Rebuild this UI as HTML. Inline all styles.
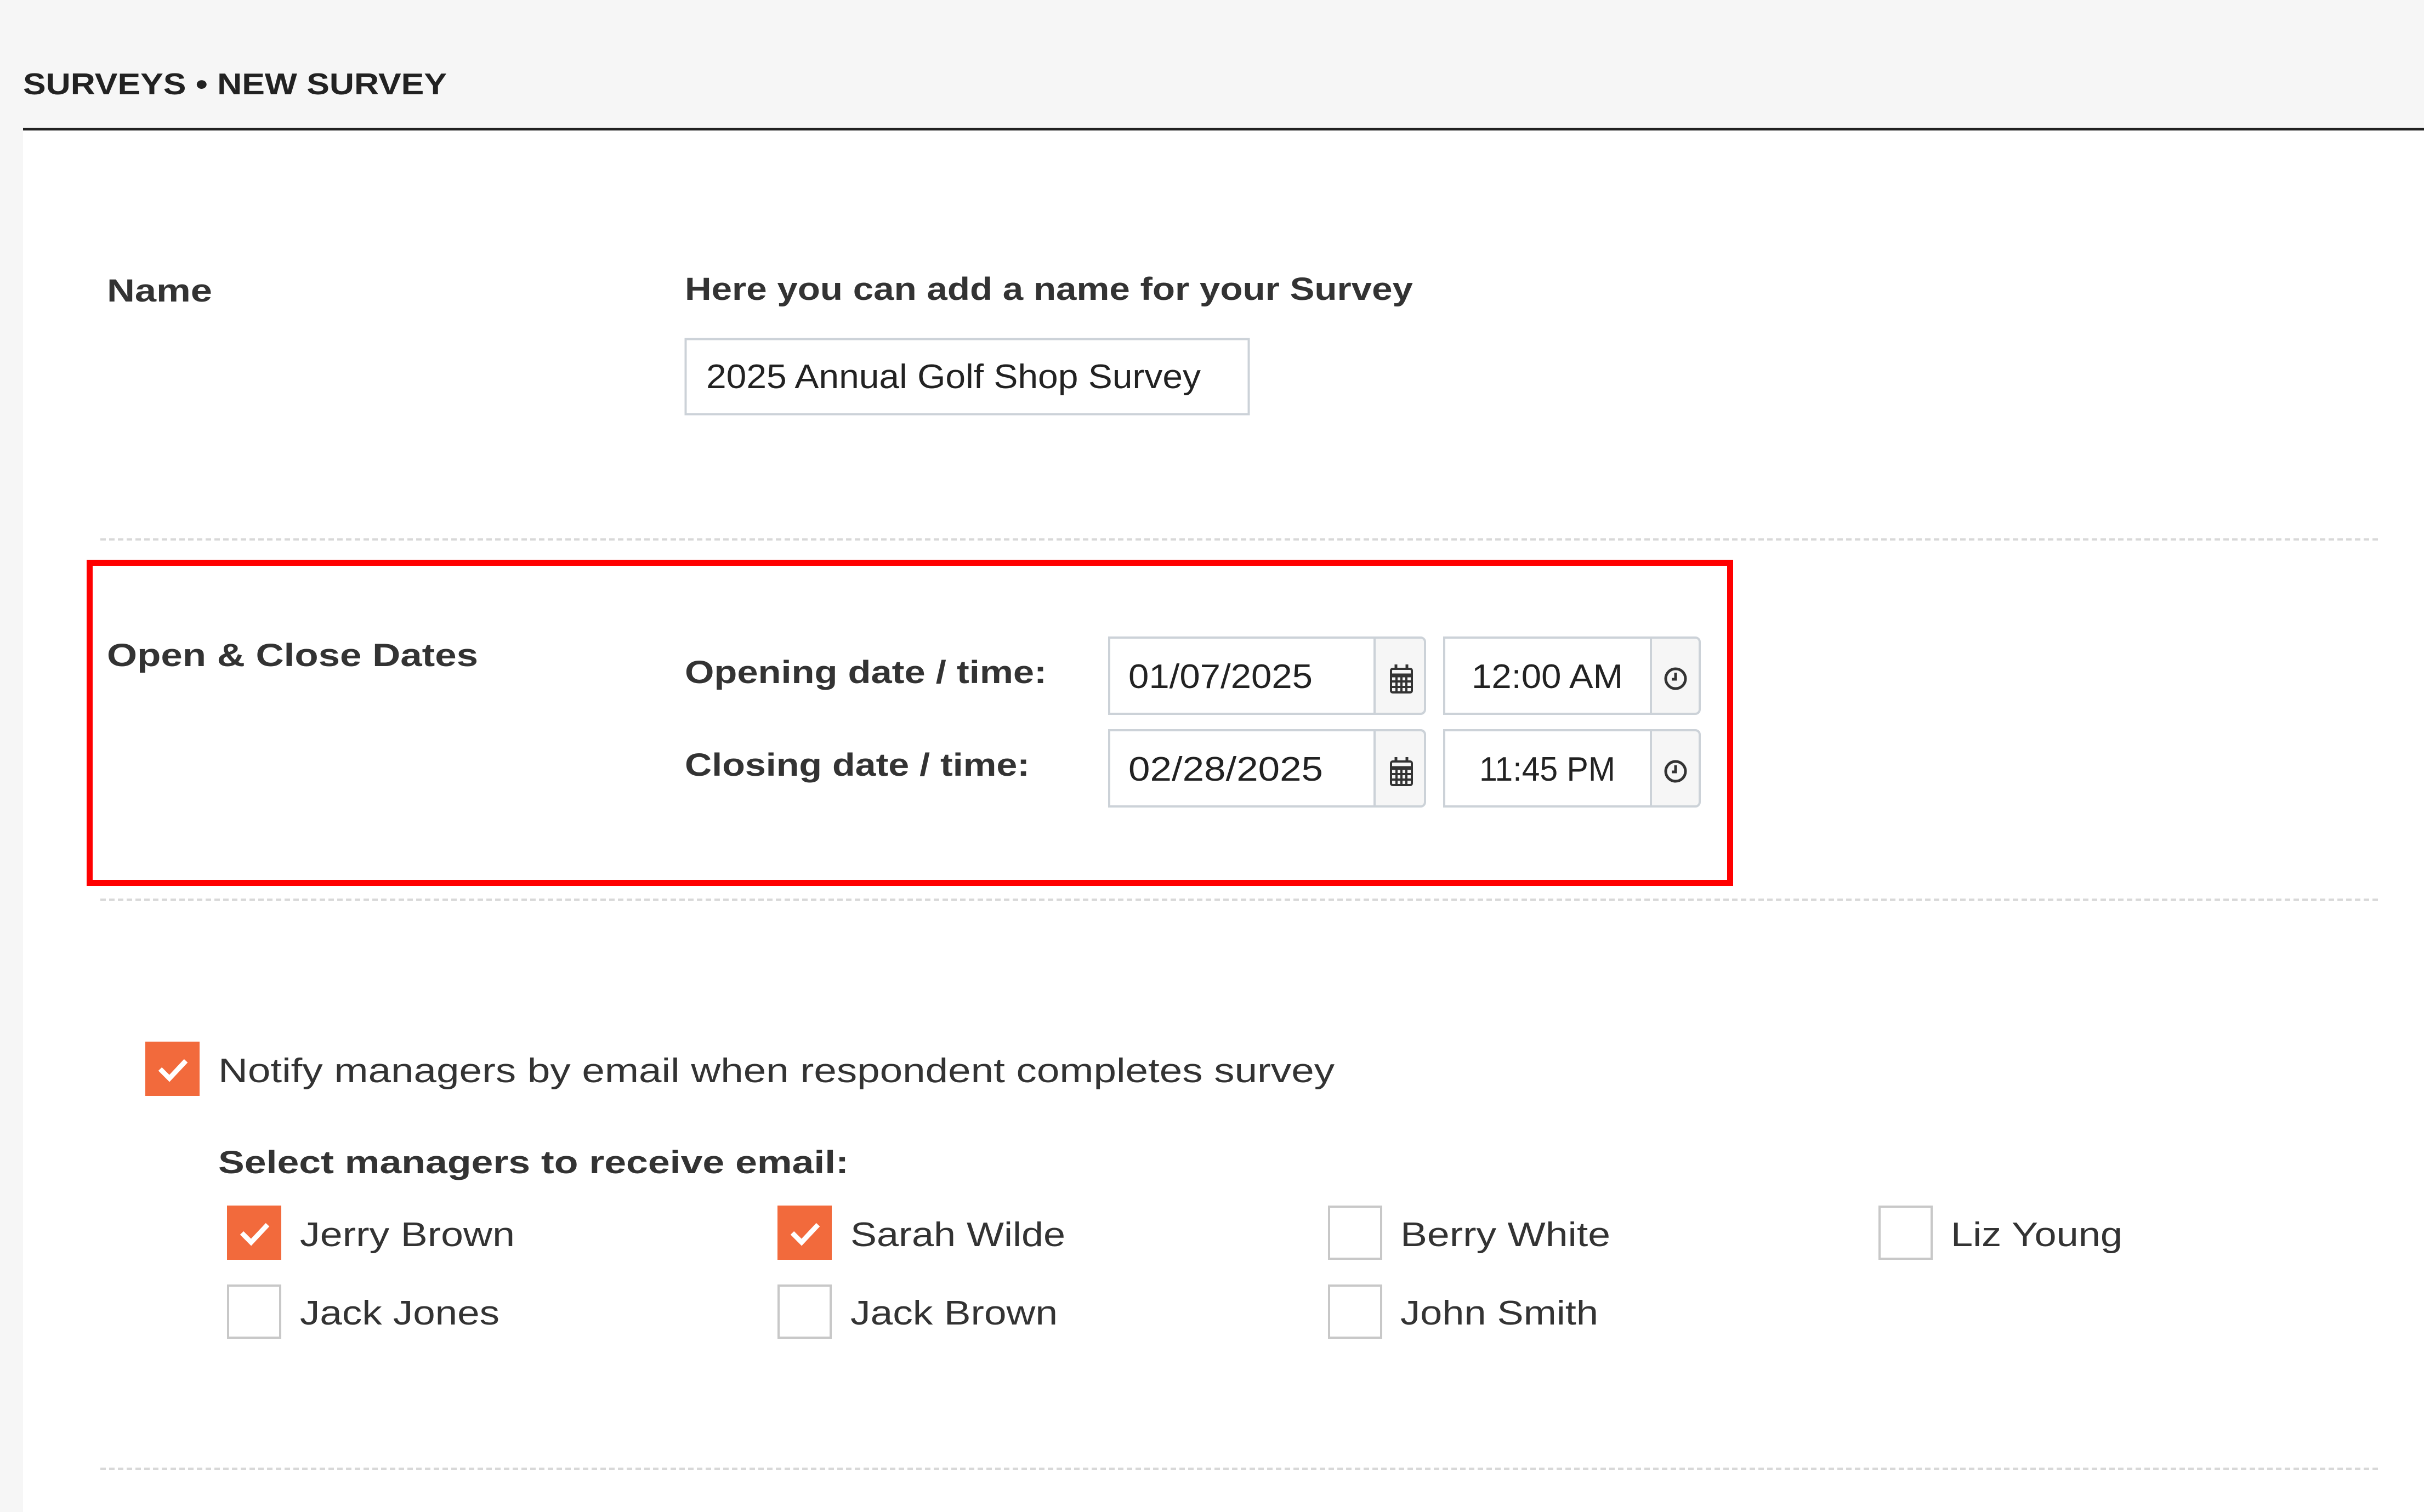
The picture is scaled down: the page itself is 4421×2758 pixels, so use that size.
<!DOCTYPE html>
<html><head><meta charset="utf-8"><style>html,body{margin:0;padding:0;background:#fff}svg{display:block}</style></head>
<body>
<svg width="4421" height="2758" viewBox="0 0 4421 2758" xmlns="http://www.w3.org/2000/svg" font-family="Liberation Sans, sans-serif">
<rect width="4421" height="2758" fill="#fff"/>
<rect width="4421" height="237" fill="#f6f6f6"/>
<rect width="42" height="2758" fill="#f6f6f6"/>
<rect x="42" y="233" width="4379" height="5" fill="#222"/>
<text x="42" y="172" font-size="55" font-weight="bold" fill="#222" textLength="773" lengthAdjust="spacingAndGlyphs">SURVEYS • NEW SURVEY</text>

<g fill="#333" font-weight="bold" font-size="58">
<text x="195" y="550" textLength="192" lengthAdjust="spacingAndGlyphs">Name</text>
<text x="1249" y="547" textLength="1328" lengthAdjust="spacingAndGlyphs">Here you can add a name for your Survey</text>
<text x="195" y="1215" textLength="677" lengthAdjust="spacingAndGlyphs">Open &amp; Close Dates</text>
<text x="1249" y="1246" textLength="660" lengthAdjust="spacingAndGlyphs">Opening date / time:</text>
<text x="1249" y="1415" textLength="629" lengthAdjust="spacingAndGlyphs">Closing date / time:</text>
<text x="398" y="2140" textLength="1150" lengthAdjust="spacingAndGlyphs">Select managers to receive email:</text>
</g>

<rect x="1250.5" y="618.5" width="1027" height="137" fill="#fff" stroke="#ccd2d8" stroke-width="4"/>
<text x="1288" y="708" font-size="62" fill="#222" textLength="902" lengthAdjust="spacingAndGlyphs">2025 Annual Golf Shop Survey</text>

<g stroke="#d8d8d8" stroke-width="4" stroke-dasharray="10 6">
<line x1="183" y1="984" x2="4342" y2="984"/>
<line x1="183" y1="1641" x2="4342" y2="1641"/>
<line x1="183" y1="2679" x2="4342" y2="2679"/>
</g>

<rect x="163.5" y="1026.5" width="2992" height="584" fill="none" stroke="#f00" stroke-width="11"/>

<!-- date/time inputs -->
<g>
<rect x="2023" y="1163" width="576" height="139" rx="8" fill="#f6f6f6" stroke="#ccd2d8" stroke-width="4"/>
<rect x="2023" y="1163" width="484" height="139" fill="#fff" stroke="#ccd2d8" stroke-width="4"/>
<rect x="2634" y="1163" width="466" height="139" rx="8" fill="#f6f6f6" stroke="#ccd2d8" stroke-width="4"/>
<rect x="2634" y="1163" width="377" height="139" fill="#fff" stroke="#ccd2d8" stroke-width="4"/>
<rect x="2023" y="1332" width="576" height="139" rx="8" fill="#f6f6f6" stroke="#ccd2d8" stroke-width="4"/>
<rect x="2023" y="1332" width="484" height="139" fill="#fff" stroke="#ccd2d8" stroke-width="4"/>
<rect x="2634" y="1332" width="466" height="139" rx="8" fill="#f6f6f6" stroke="#ccd2d8" stroke-width="4"/>
<rect x="2634" y="1332" width="377" height="139" fill="#fff" stroke="#ccd2d8" stroke-width="4"/>
</g>
<g font-size="62" fill="#222">
<text x="2058" y="1255" textLength="336" lengthAdjust="spacingAndGlyphs">01/07/2025</text>
<text x="2058" y="1424" textLength="355" lengthAdjust="spacingAndGlyphs">02/28/2025</text>
<text x="2684" y="1255" textLength="276" lengthAdjust="spacingAndGlyphs">12:00 AM</text>
<text x="2698" y="1424" textLength="248" lengthAdjust="spacingAndGlyphs">11:45 PM</text>
</g>
<!-- calendar icons -->
<g id="cal" fill="none" stroke="#333" stroke-width="4">
<rect x="2537" y="1220" width="38" height="43" rx="3"/>
<line x1="2537" y1="1232" x2="2575" y2="1232" stroke-width="7"/>
<line x1="2537" y1="1243" x2="2575" y2="1243"/>
<line x1="2537" y1="1253" x2="2575" y2="1253"/>
<line x1="2547" y1="1232" x2="2547" y2="1263"/>
<line x1="2556" y1="1232" x2="2556" y2="1263"/>
<line x1="2565" y1="1232" x2="2565" y2="1263"/>
<line x1="2546" y1="1212" x2="2546" y2="1222" stroke-width="5"/>
<line x1="2566" y1="1212" x2="2566" y2="1222" stroke-width="5"/>
</g>
<use href="#cal" y="169"/>
<g id="clk" fill="none" stroke="#333" stroke-width="5">
<circle cx="3056" cy="1238" r="18"/>
<path d="M3056 1227v12h-7"/>
</g>
<use href="#clk" y="169"/>

<!-- notify checkbox -->
<rect x="265" y="1900" width="99" height="99" fill="#f26a3c"/>
<path d="M292 1950l17 17 30-32" fill="none" stroke="#fff" stroke-width="9"/>
<text x="398" y="1974" font-size="62" fill="#333" textLength="2036" lengthAdjust="spacingAndGlyphs">Notify managers by email when respondent completes survey</text>

<!-- managers -->
<rect x="414" y="2199" width="99" height="99" fill="#f26a3c"/>
<path d="M441 2249l17 17 30-32" fill="none" stroke="#fff" stroke-width="9"/>
<rect x="1418" y="2199" width="99" height="99" fill="#f26a3c"/>
<path d="M1445 2249l17 17 30-32" fill="none" stroke="#fff" stroke-width="9"/>
<g fill="#fff" stroke="#c8c8c8" stroke-width="4">
<rect x="2424" y="2201" width="95" height="95"/>
<rect x="3428" y="2201" width="95" height="95"/>
<rect x="416" y="2345" width="95" height="95"/>
<rect x="1420" y="2345" width="95" height="95"/>
<rect x="2424" y="2345" width="95" height="95"/>
</g>
<g font-size="62" fill="#333">
<text x="547" y="2273" textLength="392" lengthAdjust="spacingAndGlyphs">Jerry Brown</text>
<text x="1551" y="2273" textLength="392" lengthAdjust="spacingAndGlyphs">Sarah Wilde</text>
<text x="2554" y="2273" textLength="383" lengthAdjust="spacingAndGlyphs">Berry White</text>
<text x="3558" y="2273" textLength="313" lengthAdjust="spacingAndGlyphs">Liz Young</text>
<text x="547" y="2416" textLength="364" lengthAdjust="spacingAndGlyphs">Jack Jones</text>
<text x="1551" y="2416" textLength="378" lengthAdjust="spacingAndGlyphs">Jack Brown</text>
<text x="2554" y="2416" textLength="361" lengthAdjust="spacingAndGlyphs">John Smith</text>
</g>
</svg>
</body></html>
